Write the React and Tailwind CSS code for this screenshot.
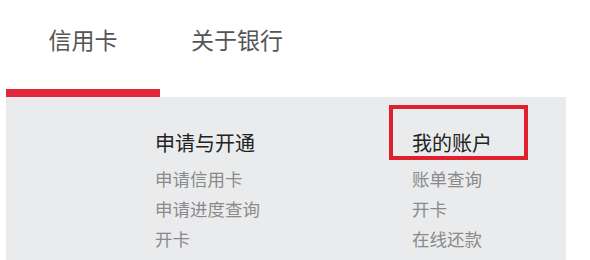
const menus = [
  { title: '申请与开通', items: ['申请信用卡', '申请进度查询', '开卡'] },
  { title: '我的账户', items: ['账单查询', '开卡', '在线还款'], marked: true },
];

const tabs = ['信用卡', '关于银行'];

export default function App() {
  return (
    <div className="w-[590px] h-[260px] overflow-hidden bg-white font-['Noto_Sans_CJK_SC',sans-serif]">
      {/* Tabs */}
      <div className="flex pl-[6px]">
        {tabs.map((t, i) => (
          <div key={t} className="w-[154px] flex flex-col items-center">
            <div className="h-[89px] pt-[21px] text-[23px] leading-[36px] text-[#555]">{t}</div>
            <div className={`h-[8px] w-full ${i === 0 ? 'bg-[#e0283a]' : ''}`} />
          </div>
        ))}
      </div>

      {/* Dropdown panel */}
      <div className="ml-[6px] w-[560px] h-[170px] bg-[#eaebec] flex pl-[149px] pt-[31px]">
        {menus.map((m) => (
          <div key={m.title} className="w-[257px] shrink-0 flex flex-col">
            <div className="relative text-[20px] leading-[30px] text-[#222]">
              {m.title}
              {m.marked && (
                <span className="absolute left-[-23px] top-[-23px] w-[139px] h-[55px] border-[4px] border-[#e0202e]" />
              )}
            </div>
            <div className="mt-[6px] flex flex-col">
              {m.items.map((it) => (
                <div key={it} className="text-[17.5px] leading-[30px] text-[#8a8a8a]">{it}</div>
              ))}
            </div>
          </div>
        ))}
      </div>
    </div>
  );
}
